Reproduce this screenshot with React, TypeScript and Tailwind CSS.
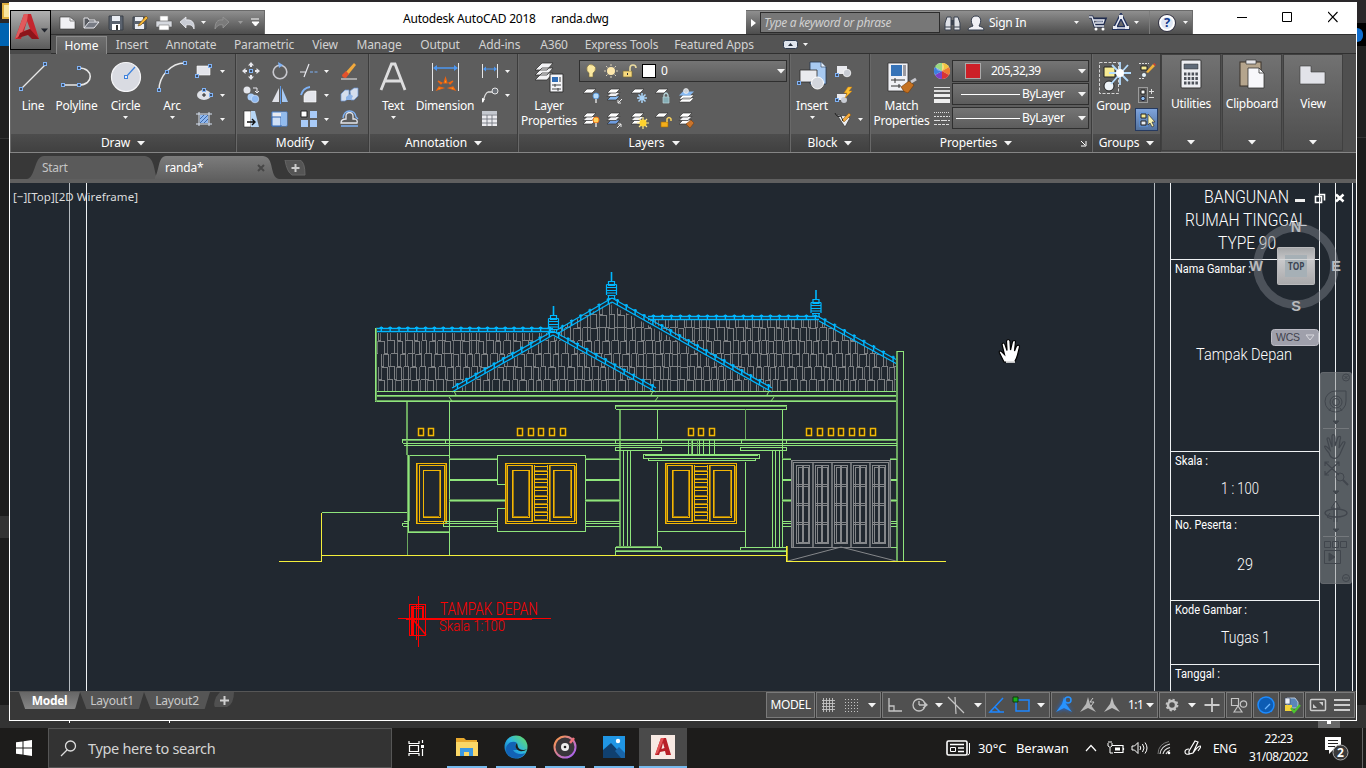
import React from "react";
import type { ReactNode } from "react";

const BLUE = "#7fb2f5";

function Caret({ big = false, dim = false }: { big?: boolean; dim?: boolean }) {
  const fill = dim ? "#9a9a9a" : "#f4f4f4";
  return big ? (
    <svg className="block shrink-0" width="8" height="5"><path d="M0 0H8L4 4.6Z" fill={fill} /></svg>
  ) : (
    <svg className="block shrink-0" width="5" height="3"><path d="M0 0H5L2.5 3Z" fill={fill} /></svg>
  );
}

function Ico({ w = 20, h = 20, className = "", children }: { w?: number; h?: number; className?: string; children: ReactNode }) {
  return (
    <svg className={`block shrink-0 ${className}`} width={w} height={h} viewBox={`0 0 ${w} ${h}`} fill="none">{children}</svg>
  );
}

function Grip({ x, y }: { x: number; y: number }) {
  return <rect x={x - 1.5} y={y - 1.5} width="3" height="3" fill="#3c4c66" stroke={BLUE} strokeWidth="1" />;
}

/* ---------- title bar ---------- */

function AppButton() {
  return (
    <div className="flex h-10 w-[41px] items-center border border-black bg-gradient-to-b from-[#b0b0b0] to-[#5c5c5c]">
      <Ico w={39} h={38}>
        <path d="M4 28 13 3h7l8 25h-7l-2-7-7 1-2 6Z" fill="#c4262e" />
        <path d="M13 3h4l-1 7-6 14-6 4Z" fill="#e05a5c" />
        <path d="M16 10l3 8-6 2Z" fill="#8f8f8f" />
        <path d="M9 22l10-4 9 10h-7l-4-4-10 3Z" fill="#8d151b" />
        <path d="M30 17.500h7l-3.500 4Z" fill="#20242c" />
      </Ico>
    </div>
  );
}

function QuickAccess() {
  return (
    <div className="flex h-6 w-[214px] shrink-0 items-center border-t border-r border-[#6a6a6a] bg-gradient-to-b from-[#8f8f8f] to-[#4d4d4d] pl-[6px]">
      <Ico w={24}><path d="M3 4h10l5 4v8H3Z" fill="#f1f1f4" stroke="#333" strokeWidth=".6" /><path d="M13 4v4h5" stroke="#888" /></Ico>
      <Ico w={24}><path d="M3 15V5h4l1 2h6v2" fill="#55585e" stroke="#e4e4e8" /><path d="M3 15 8 9h10l-5 6Z" fill="#777b84" stroke="#e9e9ee" /></Ico>
      <Ico w={24}><path d="M4 3h14v14H5l-1-1Z" fill="#5a626e" stroke="#3b4148" /><path d="M7 3h8v5H7Z" fill="#e9ecf2" /><path d="M7 11h8v6H7Z" fill="#fff" /><path d="M11 12h2v5h-2Z" fill="#333" /></Ico>
      <Ico w={24}><path d="M4 4h13v12H4Z" fill="#5a626e" stroke="#3b4148" /><path d="M6 4h8v4H6ZM6 11h9v5H6Z" fill="#e9ecf2" /><path d="M10 11 17 3l2 2-7 7-3 1Z" fill="#f2b53a" stroke="#6b4a12" strokeWidth=".6" /></Ico>
      <Ico w={24}><path d="M7 3h8v6H7Z" fill="#fff" stroke="#999" strokeWidth=".6" /><path d="M3 8h16v6H3Z" fill="#d6d9df" stroke="#555" strokeWidth=".6" /><path d="M6 12h10v5H6Z" fill="#fff" stroke="#777" strokeWidth=".6" /></Ico>
      <Ico w={20}><path d="M3 9 9 4v3c6-1 9 3 8 9-1-3-3-5-8-4v3Z" fill="#c9ccd4" stroke="#f4f4f8" strokeWidth=".7" /></Ico>
      <span className="flex w-[10px] justify-center pl-[3px]"><Caret /></span>
      <Ico w={25} className="ml-[4px]"><path d="M18 9 12 4v3C6 6 4 10 4 16c2-3 4-5 8-4v3Z" fill="#7a7a7a" stroke="#9b9b9b" strokeWidth=".7" /></Ico>
      <span className="ml-[2px] w-[10px]"><Caret dim /></span>
      <Ico w={9} h={10} className="ml-[3px]"><path d="M0 1h8M1 4h7L4.500 8Z" stroke="#fff" fill="#fff" /></Ico>
    </div>
  );
}

function InfoCenter() {
  return (
    <div className="flex h-6 w-[447px] shrink-0 items-center border-t border-r border-[#6a6a6a] bg-gradient-to-b from-[#8f8f8f] to-[#4d4d4d] text-[12px] text-white">
      <span className="flex w-[14px] justify-center"><Ico w={5} h={8}><path d="M0 0 5 4 0 8Z" fill="#fff" /></Ico></span>
      <div className="flex h-[21px] w-[180px] items-center border border-[#2c2c2c] bg-[#777] pl-[3px] tracking-[-0.35px] text-[#d0d0d0] italic">Type a keyword or phrase</div>
      <Ico w={20} className="ml-[3px]"><path d="M2 17V10l2-6h4v13ZM11 17V4h4l2 6v7Z" fill="#dfe2e8" stroke="#3a4250" /><path d="M8 7h3v5H8Z" fill="#3a4250" /><path d="M2 14h6M11 14h6" stroke="#3a4250" /></Ico>
      <Ico w={20} className="ml-[3px]"><path d="M2 17c0-3 3-3 5-4-3-5-2-10 3-10s6 5 3 10c2 1 5 1 5 4Z" fill="#f1f1f5" stroke="#333c4c" /></Ico>
      <span className="ml-[3px] w-[85px] tracking-[-0.25px]">Sign In</span>
      <Caret />
      <Ico w={21} className="ml-[8px]"><path d="M2 4h3l3 9h9M5 6h13l-2 5H8" fill="#8b95b0" stroke="#1f2b4d" strokeWidth="3" /><path d="M2 4h3l3 9h9M6 7h11l-1 3H8" stroke="#e7eaf2" strokeWidth="1.300" /><circle cx="9" cy="16" r="1.500" fill="#fff" /><circle cx="16" cy="16" r="1.500" fill="#fff" /></Ico>
      <Ico w={18} className="ml-[4px]"><path d="M9 3 3 15h12Z" stroke="#20305c" strokeWidth="4" /><path d="M9 3 3 15h12Z" stroke="#e7eaf2" strokeWidth="1.600" /><path d="M7 2h4v4H7ZM1 13h4v3H1ZM13 13h4v3h-4Z" fill="#e7eaf2" /></Ico>
      <span className="ml-[4px]"><Caret /></span>
      <span className="ml-[10px] h-full w-px bg-[#7c7c7c]" />
      <span className="ml-[9px] flex size-4 items-center justify-center rounded-full border-2 border-white bg-[#dfe7f5] text-[13px] font-bold text-[#123a8c] ring-1 ring-[#334]">?</span>
      <span className="ml-[8px]"><Caret /></span>
    </div>
  );
}

const TABS: [string, string][] = [
  ["Insert", "w-[50px]"], ["Annotate", "w-[68px]"], ["Parametric", "w-[78px]"], ["View", "w-[44px]"],
  ["Manage", "w-[64px]"], ["Output", "w-[58px]"], ["Add-ins", "w-[61px]"], ["A360", "w-[48px]"],
  ["Express Tools", "w-[87px]"], ["Featured Apps", "w-[98px]"],
];

function TopBar() {
  return (
    <div className="flex h-[52px] bg-white">
      <div className="flex w-[41px] flex-col pt-2"><AppButton /><div className="h-1 bg-[#4a4a4a]" /></div>
      <div className="flex flex-1 flex-col">
        <div className="flex h-8 pt-2">
          <QuickAccess />
          <div className="flex w-[481px] shrink-0 pl-[138px] text-[12px] leading-[17px] text-black">
            <span className="w-[148px] shrink-0 tracking-[-0.22px] whitespace-nowrap">Autodesk AutoCAD 2018</span>
            <span className="tracking-[-0.3px]">randa.dwg</span>
          </div>
          <InfoCenter />
          <div className="flex pl-[42px]">
            <Ico w={47} h={16}><path d="M2 7.500h10" stroke="#000" /></Ico>
            <Ico w={46} h={16}><path d="M.5 2.500h9v9h-9Z" stroke="#000" /></Ico>
            <Ico w={12} h={16}><path d="m0 2 9.500 10M9.500 2 0 12" stroke="#000" strokeWidth="1.100" /></Ico>
          </div>
        </div>
        <div className="flex h-5 items-end border-t border-b border-[#303030] bg-[#545454] pl-[5px] text-[12px] text-[#d2d2d2]">
          <div className="-mb-px flex h-[18px] w-[51px] items-center justify-center border border-b-0 border-[#8a8a8a] bg-gradient-to-b from-[#6f6f6f] to-[#5d5d5d] pt-px text-white">Home</div>
          {TABS.map(([t, w]) => (
            <div key={t} className={`flex h-[17px] items-center justify-center pt-px tracking-[-0.15px] whitespace-nowrap ${w}`}>{t}</div>
          ))}
          <div className="ml-[20px] flex h-[17px] items-center gap-[5px]">
            <Ico w={15} h={9}><rect x=".5" y=".5" width="14" height="8" rx="2" fill="#dfe5ee" stroke="#2e3a4d" /><path d="m5 6 2.500-3L10 6Z" fill="#26303f" /></Ico>
            <Caret />
          </div>
        </div>
      </div>
    </div>
  );
}

/* ---------- ribbon ---------- */

function Panel({ w, title, launcher = false, children }: { w: string; title: string; launcher?: boolean; children: ReactNode }) {
  return (
    <section className={`flex shrink-0 flex-col border-r border-[#3c3c3c] ${w}`}>
      <div className="flex h-20 border-l border-[#686868] bg-[#5d5d5d]">{children}</div>
      <div className="flex h-[18px] items-center justify-center gap-[7px] border-l border-[#686868] bg-gradient-to-b from-[#4d4d4d] to-[#404040] text-[12px] text-white">
        <span className={launcher ? "ml-auto pl-2 tracking-[-0.1px]" : "tracking-[-0.1px]"}>{title}</span>
        <Caret big />
        {launcher && <Ico w={7} h={7} className="mr-1 ml-auto"><path d="m1 1 4 4M6 1v5H1" stroke="#fff" /></Ico>}
      </div>
    </section>
  );
}

function Big({ w, label, caret = false, children }: { w: string; label: string; caret?: boolean; children: ReactNode }) {
  return (
    <div className={`flex shrink-0 flex-col items-center pt-[6px] text-center text-[12px] leading-[15px] text-white ${w}`}>
      <div className="h-[38px]">{children}</div>
      <span className="tracking-[-0.25px] whitespace-pre">{label}</span>
      {caret && <span className="mt-[3px]"><Caret /></span>}
    </div>
  );
}

function Col({ w, children }: { w: string; children: ReactNode }) {
  return <div className={`grid shrink-0 grid-rows-[24px_24px_24px] content-start items-center justify-items-center pt-[5px] ${w}`}>{children}</div>;
}

function DrawPanel() {
  return (
    <Panel w="w-[226px]" title="Draw">
      <Big w="w-[44px]" label="Line"><Ico w={32} h={32}><path d="M4 29 28 5" stroke="#e8e8e8" strokeWidth="1.300" /><Grip x={4} y={29} /><Grip x={28} y={4} /></Ico></Big>
      <Big w="w-[43px]" label="Polyline"><Ico w={32} h={32}><path d="M2 25h16c15 0 15-17 0-17" stroke="#e8e8e8" strokeWidth="1.600" /><Grip x={2} y={25} /><Grip x={18} y={25} /><Grip x={18} y={8} /></Ico></Big>
      <Big w="w-[55px]" label="Circle" caret><Ico w={32} h={32}><circle cx="16" cy="17" r="14.500" fill="#d9dbe2" stroke="#f6f6f8" strokeWidth="1.200" /><path d="M16 17 25 7" stroke="#3f83dd" strokeWidth="1.200" /><rect x="14.500" y="15.500" width="3" height="3" fill="#e8edf8" stroke="#3f83dd" /></Ico></Big>
      <Big w="w-[38px]" label="Arc" caret><Ico w={34} h={32}><path d="M4 30C4 16 16 3 30 3" stroke="#e8e8e8" strokeWidth="1.500" /><Grip x={4} y={30} /><Grip x={12} y={12} /><Grip x={30} y={3} /></Ico></Big>
      <Col w="w-[25px]">
        <Ico><path d="M3 5h13v9H3Z" fill="#e3e4ea" stroke="#fff" strokeWidth=".6" /><Grip x={3} y={15} /><Grip x={16} y={5} /></Ico>
        <Ico><ellipse cx="10" cy="10" rx="7" ry="5" fill="#e0e2e8" /><path d="M8 10h4M10 8v4" stroke="#222" /><Grip x={10} y={5} /><Grip x={17} y={10} /></Ico>
        <Ico><path d="M5 3v14M15 3v14M2 5h16M2 15h16" stroke="#d8e3f3" /><path d="M6 6h8v8H6Z" fill="#8fb7ee" /><path d="m6 10 4-4m-4 8 8-8m-4 8 4-4" stroke="#2a5596" strokeWidth=".8" /></Ico>
      </Col>
      <Col w="w-[12px]"><Caret /><Caret /><Caret /></Col>
    </Panel>
  );
}

function ModifyPanel() {
  return (
    <Panel w="w-[133px]" title="Modify">
      <Col w="w-[28px]">
        <Ico><path d="M10 3v14M3 10h14" stroke="#e8e8ee" strokeWidth="2" strokeDasharray="3 2.500" /><path d="m10 1 3 3.500H7ZM10 19l3-3.500H7ZM1 10l3.500-3v6ZM19 10l-3.500-3v6Z" fill="#e8e8ee" /><Grip x={10} y={10} /></Ico>
        <Ico><circle cx="6" cy="5" r="3.500" fill="#e4e6ec" /><circle cx="10" cy="12" r="3.500" fill="#a9cdf8" /><circle cx="14" cy="14" r="3.800" fill="#8fb9f0" stroke="#dce9fb" strokeWidth=".6" /><path d="M12 3h4v4m-2-1 2 2 2-2" stroke="#e8e8ee" /></Ico>
        <Ico><path d="M3 2h7v16H3Z" fill="#fff" stroke="#222" strokeWidth=".6" /><path d="M10 2h4l4 16h-8Z" fill="#b7d6f5" /><path d="M6 13h7m-2-3 3 3-3 3" stroke="#111" strokeWidth="1.400" /></Ico>
      </Col>
      <Col w="w-[29px]">
        <Ico><circle cx="10" cy="11" r="6.800" stroke="#c9c9cf" strokeWidth="1.600" /><path d="m8 1 5 3-4 3Z" fill={BLUE} /></Ico>
        <Ico><path d="M9 3v14H2Z" fill="#dfe1e8" /><path d="M12 3v14h6Z" fill="#a6c9f4" /><path d="M10.500 1v18" stroke="#5b97e6" /></Ico>
        <Ico><path d="M2 3h15v14H2Z" fill="#e8eaf0" stroke="#4d87d6" /><path d="M2 8h9v9H2Z" fill="#cfdff5" stroke="#2d62b2" /><path d="M11 4h5v12h-5Z" fill="#91bbee" /></Ico>
      </Col>
      <Col w="w-[30px]">
        <Ico><path d="M1 11h6M5 16 10 3" stroke="#e8e8ee" strokeWidth="1.200" /><path d="M11 11h8" stroke={BLUE} strokeDasharray="3 1.500" /></Ico>
        <Ico><path d="M5 17V11q1-5 7-5h5v11Z" fill="#e3e5eb" stroke="#fff" strokeWidth=".6" /><path d="M2 10q2-7 9-8" stroke={BLUE} strokeWidth="1.800" /></Ico>
        <Ico><path d="M2 2h6v6H2Z" fill="#fff" stroke="#222" /><path d="M11 2h7v7h-7ZM2 11h7v7H2ZM11 11h7v7h-7Z" fill="#a9cbf7" /></Ico>
      </Col>
      <Col w="w-[5px]"><Caret /><Caret /><Caret /></Col>
      <Col w="w-[40px]">
        <Ico><path d="m6 12 9-10 2 2-8 10Z" fill="#f2a93c" /><path d="m3 14 4-4 3 3-3 4q-4 0-4-3Z" fill="#e4522c" /><path d="M2 18h16" stroke="#eee" /></Ico>
        <Ico><path d="m2 9 4-4h4v8l-4 3H2ZM11 6l4-3h4v8l-4 4h-3Z" fill="#d5deed" stroke="#6b97d5" strokeWidth=".7" /><path d="m7 12 4-3 3 2-2 4H7Z" fill="#8eb4e8" /></Ico>
        <Ico><path d="M7 10V7a3 3 0 0 1 7 0v3h2q3 1 2 4H2q0-4 5-4Z" stroke="#e3e6ec" strokeWidth="1.300" /><path d="M2 17h17M4 9q1-7 6.500-7t6.500 6l2 2" stroke={BLUE} strokeWidth="1.300" /></Ico>
      </Col>
    </Panel>
  );
}

function AnnotationPanel() {
  return (
    <Panel w="w-[149px]" title="Annotation">
      <Big w="w-[46px]" label="Text" caret><Ico w={32} h={32}><path d="M4 30 14.500 4h3.500L28 30M8 21h17" stroke="#dededf" strokeWidth="2.800" /></Ico></Big>
      <Big w="w-[58px]" label="Dimension"><Ico w={32} h={32}><path d="M3.500 3v28M29.500 3v28" stroke="#e6e6e6" /><path d="M6 8h21" stroke="#4d97f0" strokeWidth="1.500" /><path d="m4 8 4-3v6ZM29 8l-4-3v6Z" fill="#4d97f0" /><path d="m15 23 1.500-5 1.500 5ZM12 24l-3-3 4 2ZM21 24l3-3-4 2ZM8 30l2-3 4 1ZM26 30l-2-3-4 1Z" fill="#ffb01f" stroke="#f0640f" strokeWidth="1.200" /></Ico></Big>
      <Col w="w-[31px]">
        <Ico><path d="M2.500 3v14M17.500 3v14" stroke="#e6e6e6" /><path d="M4 8h12" stroke="#4d97f0" /><path d="m3 8 3-2.500v5ZM17 8l-3-2.500v5Z" fill="#4d97f0" /></Ico>
        <Ico><path d="M3 17q2-9 5-10h5" stroke="#dedede" strokeWidth="1.300" /><path d="m2 18 0-5 3 1Z" fill="#fff" /><circle cx="15" cy="6" r="3" fill="#6b7077" stroke="#e6e6e6" /></Ico>
        <Ico><path d="M2 2h15v15H2Z" fill="#ebebef" /><path d="M2 2h15v3.500H2Z" fill="#c4c8cf" /><path d="M2 6h15M2 10h15M2 14h15M7 6v11M12 6v11" stroke="#727780" strokeWidth=".9" /></Ico>
      </Col>
      <Col w="w-[5px]"><Caret /><Caret /><span /></Col>
    </Panel>
  );
}

function Stack({ top = "#fff", bottom = "#fff", n = 3 }: { top?: string; bottom?: string; n?: number }) {
  return (
    <>
      {n > 2 && <path d="m2 14 4-4h9l-4 4Z" fill={bottom} stroke="#333" strokeWidth=".7" />}
      {n > 1 && <path d="m2 10.500 4-4h9l-4 4Z" fill="#f2f2f4" stroke="#333" strokeWidth=".7" />}
      <path d="m2 7 4-4h9l-4 4Z" fill={top} stroke="#333" strokeWidth=".7" />
    </>
  );
}

function LayersPanel() {
  return (
    <Panel w="w-[272px]" title="Layers">
      <Big w="w-[60px]" label={"Layer\nProperties"}>
        <Ico w={32} h={34}>
          <path d="m2 20 7-7h11l-6 7ZM2 15l7-7h11l-6 7ZM2 10l7-7h11l-6 7Z" fill="#f3f3f5" stroke="#333" strokeWidth=".8" />
          <path d="M17 14h13v18H17Z" fill="#f5f5f8" stroke="#333" /><path d="M19 17h6v5h-6Z" fill="#2f6cb5" /><path d="M26 17h2v5h-2Z" fill="#999" /><path d="M19 25h9M19 29h9M22 24v3M25 28v3" stroke="#333" strokeWidth=".9" />
        </Ico>
      </Big>
      <div className="flex flex-col pt-[6px]">
        <div className="flex h-[22px] w-[208px] items-center border border-[#2f2f2f] bg-gradient-to-b from-[#757575] to-[#5c5c5c] pr-[1px] text-[12px] text-white">
          <Ico w={20} className="ml-px"><path d="M8 16v-4q-3-2-2-6 2-4 6-2 4 2 2 6l-2 2v4Z" fill="#fbe8a0" stroke="#7a6a36" strokeWidth=".6" /></Ico>
          <Ico w={20}><circle cx="10" cy="10" r="4" fill="#ffe9ad" /><path d="M10 3v2m0 10v2M3 10h2m10 0h2M5 5l1.500 1.500m7 7L15 15M15 5l-1.500 1.500m-7 7L5 15" stroke="#d8cfb8" /></Ico>
          <Ico w={20}><path d="M2 10h9v6H2Z" fill="#f7d97c" stroke="#7a6a36" strokeWidth=".7" /><path d="M9 10V7a3 3 0 0 1 6 0" stroke="#eadb9e" strokeWidth="1.600" /><path d="M6.500 12v2" stroke="#333" /></Ico>
          <span className="ml-px size-[14px] border border-black bg-white" />
          <span className="ml-[5px] flex-1">0</span>
          <Caret big />
        </div>
        <div className="mt-[2px] ml-[2px] grid grid-cols-[24px_24px_24px_24px_24px] grid-rows-[24px_24px] items-center">
          <Ico w={24}><Stack n={1} /><circle cx="15" cy="10" r="3" fill="#b5daf8" stroke="#4d92dd" strokeWidth=".8" /><path d="M15 13v4" stroke="#ddd" strokeWidth="1.500" /></Ico>
          <Ico w={24}><Stack bottom="#86b9f2" /><path d="m17 13-4 4m0-3v3h3" stroke="#eee" /></Ico>
          <Ico w={24}><Stack n={1} /><path d="M13 7v10M8 12h10M9.500 8.500l7 7M16.500 8.500l-7 7" stroke="#a9d3f7" strokeWidth="1.500" /></Ico>
          <Ico w={24}><Stack n={1} /><path d="M10 11h6v6h-6Z" fill="#86aeb6" stroke="#b8d5da" strokeWidth=".7" /><path d="M11 11V9q2-4 4 0v2" stroke="#b8d5da" strokeWidth="1.300" /></Ico>
          <Ico w={24}><path d="m2 16 4-4h11l-4 4ZM2 13l4-4h11l-4 4Z" fill="#fff" stroke="#333" strokeWidth=".5" /><path d="m2 9.500 4-4h11l-4 4Z" fill="#86b9f2" /><circle cx="9" cy="5" r="2.500" fill="#ccd2da" stroke="#fff" strokeWidth=".6" /></Ico>
          <Ico w={24}><Stack /><circle cx="15" cy="10" r="3" fill="#ffd35c" stroke="#f0751b" /><path d="M15 13v4" stroke="#ddd" strokeWidth="1.500" /></Ico>
          <Ico w={24}><Stack bottom="#6f9de0" /><path d="m12 18 4-4m-3 0h3v3" stroke="#eee" /></Ico>
          <Ico w={24}><Stack /><path d="M14 7v12M8 13h12M10 9l8 8M18 9l-8 8" stroke="#ffe98c" strokeWidth="1.200" /><circle cx="14" cy="13" r="3.500" fill="#ffd22e" /></Ico>
          <Ico w={24}><Stack n={1} /><path d="M8 12h7v5H8Z" fill="#f4ae1b" stroke="#a56d00" strokeWidth=".6" /><path d="M14 12V9q2-3 4 0v2" stroke="#f7d15e" strokeWidth="1.500" /></Ico>
          <Ico w={24}><Stack /><path d="m9 14 5-4 3 3-4 5Z" fill="#c9742c" stroke="#7b3e0c" strokeWidth=".6" /></Ico>
        </div>
      </div>
    </Panel>
  );
}

function BlockPanel() {
  return (
    <Panel w="w-[80px]" title="Block">
      <Big w="w-[42px]" label="Insert" caret>
        <Ico w={32} h={34}><path d="M14 2h11l5 5v17H14Z" fill="#a8caf2" stroke="#25364e" strokeWidth=".8" /><path d="M25 2v5h5" fill="#e4effc" stroke="#25364e" strokeWidth=".6" /><path d="M4 10h17v12H4Z" fill="#e9eaef" stroke="#2c2c2c" strokeWidth=".8" /><circle cx="21.500" cy="23" r="6" fill="#d3d6dd" stroke="#fff" /><Grip x={3} y={23} /></Ico>
      </Big>
      <Col w="w-[20px]">
        <Ico><path d="M4 5h10v8H4Z" fill="#e9eaef" /><circle cx="14" cy="12" r="3.800" fill="#c8ccd4" stroke="#fff" strokeWidth=".7" /><Grip x={4} y={14} /></Ico>
        <Ico><path d="M4 9h9v6H4Z" fill="#e9eaef" /><circle cx="11" cy="15" r="3" fill="#c8ccd4" /><path d="m15 2-4 6h3l-2 5 7-7h-3l3-4Z" fill="#ffc12e" stroke="#c8780f" strokeWidth=".5" /><Grip x={4} y={15} /></Ico>
        <Ico><path d="M4 6 12 18l5-9-4-2Z" fill="#eceef2" stroke="#333" strokeWidth=".7" /><path d="m9 11 7-7 2 2-7 7Z" fill="#f2a93c" stroke="#7b4a0c" strokeWidth=".5" /><path d="M2 4q2 5 6 3l2 5" stroke="#222" /></Ico>
      </Col>
      <Col w="w-[15px]"><span /><span /><Caret /></Col>
    </Panel>
  );
}

function Combo({ className = "", children }: { className?: string; children: ReactNode }) {
  return <div className={`flex h-[22px] w-[137px] items-center border border-[#2f2f2f] bg-gradient-to-b from-[#757575] to-[#5c5c5c] pr-[2px] ${className}`}>{children}</div>;
}

function PropertiesPanel() {
  return (
    <Panel w="w-[222px]" title="Properties" launcher>
      <Big w="w-[61px]" label={"Match\nProperties"}>
        <Ico w={34} h={34}><path d="M3 3h20v28H3Z" fill="#f0f1f5" stroke="#333" strokeWidth=".8" /><path d="M6 5h11v11H6Z" fill="#3673b8" /><path d="M18 5h3v11h-3Z" fill="#9a9aa2" /><path d="M6 20h14M6 26h10M10 18v5M14 24v4" stroke="#333" /><path d="m16 27 8-6 5 4-6 8q-4 0-7-6Z" fill="#c57120" stroke="#6d3b0b" strokeWidth=".6" /><path d="m26 22 5-3" stroke="#c9c9cf" strokeWidth="3" /></Ico>
      </Big>
      <Col w="w-[20px]">
        <Ico><circle cx="10" cy="10" r="8" fill="#eee" /><path d="M10 10V2a8 8 0 0 1 7 4Z" fill="#f3c43d" /><path d="m10 10 7-4a8 8 0 0 1 0 8Z" fill="#ef7d32" /><path d="m10 10 7 4a8 8 0 0 1-7 4Z" fill="#d83434" /><path d="M10 10v8a8 8 0 0 1-7-4Z" fill="#7b3fc9" /><path d="m10 10-7 4a8 8 0 0 1 0-8Z" fill="#3d7fe0" /><path d="M10 10 3 6a8 8 0 0 1 7-4Z" fill="#65c43f" /><circle cx="8" cy="6" r="4" fill="#fff" opacity=".35" /></Ico>
        <Ico><path d="M2 2.500h16" stroke="#ddd" /><path d="M2 6h16" stroke="#ddd" strokeWidth="2" /><path d="M2 10.500h16" stroke="#eee" strokeWidth="3" /><path d="M2 16h16" stroke="#eee" strokeWidth="4" /></Ico>
        <Ico><path d="M2 3.500h16" stroke="#ddd" strokeDasharray="1 1" /><path d="M2 7.500h16" stroke="#ddd" strokeDasharray="2 1" /><path d="M2 11.500h16" stroke="#ddd" strokeDasharray="6 1" /><path d="M2 15.500h16" stroke="#ddd" strokeDasharray="3 1" /></Ico>
      </Col>
      <div className="flex flex-col pt-[6px] text-[12px] tracking-[-0.1px] text-white">
        <Combo><span className="mr-[10px] ml-[12px] size-4 border border-[#aaa] bg-[#cd2027]" /><span className="flex-1 tracking-[-0.55px]">205,32,39</span><Caret big /></Combo>
        <Combo className="mt-px"><span className="ml-2 h-px w-[59px] bg-white" /><span className="ml-[2px] flex-1 tracking-[-0.3px]">ByLayer</span><Caret big /></Combo>
        <Combo className="mt-[2px]"><span className="ml-[3px] h-px w-[64px] bg-white" /><span className="ml-[2px] flex-1 tracking-[-0.3px]">ByLayer</span><Caret big /></Combo>
      </div>
    </Panel>
  );
}

function GroupsPanel() {
  return (
    <Panel w="w-[69px]" title="Groups">
      <Big w="w-[41px]" label="Group">
        <Ico w={34} h={34}><rect x="2.500" y="2.500" width="19" height="31" stroke="#d5d5d5" strokeDasharray="3 1.500" /><path d="M7 7h11v10H7Z" fill="#f7eb93" stroke="#222" /><circle cx="12" cy="26" r="5" fill="#eef3f8" stroke="#222" /><path d="M23 2v23M12 13h22M15 5l16 16M31 5 14 24" stroke="#b5ddff" strokeWidth="1.800" /><circle cx="23" cy="13" r="4" fill="#fff" /></Ico>
      </Big>
      <Col w="w-[25px]">
        <Ico><path d="M2 2.500h10M2 17.500h6" stroke="#ddd" strokeDasharray="2 1" /><path d="M4 5h6v4H4Z" fill="#f7eb93" stroke="#222" /><circle cx="7" cy="14" r="2.500" fill="#e6f3fb" stroke="#222" strokeWidth=".6" /><path d="m9 11 7-8 2 2-7 7Z" fill="#f2b33a" /><path d="m16 3 1.500-1 1.500 2-1 1Z" fill="#d04030" /></Ico>
        <Ico><rect x="1.500" y="2.500" width="9" height="15" stroke="#ddd" strokeDasharray="1 1" /><path d="M4 5h4v4H4Z" fill="#fff" stroke="#222" /><circle cx="6" cy="13.500" r="2.200" fill="#8fbdee" stroke="#223" /><path d="M12 6.500h5M14.500 4v5M12 12.500h5" stroke="#ddd" /></Ico>
        <div className="flex size-[23px] items-center justify-center border border-[#263a60] bg-gradient-to-b from-[#7fa4dc] to-[#54739f]"><Ico><rect x="2.500" y="3.500" width="8" height="14" stroke="#5b97e6" strokeDasharray="1 1" /><path d="M4 5h5v4H4Z" fill="#f7eb93" stroke="#222" /><path d="M4 12h5v4H4Z" fill="#e8ecf2" stroke="#222" /><path d="m11 5 0 11 2-2 2 4 2-1-2-4h3Z" fill="#f8f2b0" stroke="#333" strokeWidth=".7" /></Ico></div>
      </Col>
    </Panel>
  );
}

function Collapsed({ label, children }: { label: string; children: ReactNode }) {
  return (
    <div className="mr-px flex h-[97px] w-[60px] shrink-0 flex-col items-center border border-[#404040] bg-gradient-to-b from-[#727272] to-[#4e4e4e] pt-[4px] text-[12px] text-white">
      <div className="h-9">{children}</div>
      <span className="tracking-[-0.25px]">{label}</span>
      <span className="mt-auto mb-[5px]"><Caret big /></span>
    </div>
  );
}

function Ribbon() {
  return (
    <div className="flex h-[99px] border-b border-[#858585] bg-[#4f4f4f]">
      <DrawPanel /><ModifyPanel /><AnnotationPanel /><LayersPanel /><BlockPanel /><PropertiesPanel /><GroupsPanel />
      <Collapsed label="Utilities"><Ico w={24} h={30}><rect x="2" y="1" width="20" height="28" rx="1" fill="#edeef2" stroke="#333" /><path d="M5 5h14v5H5Z" fill="#5f6a78" stroke="#333" strokeWidth=".5" /><path d="M5 15h14M5 19.500h14M5 24h14" stroke="#4c5058" strokeWidth="3" strokeDasharray="2.500 1.300" /></Ico></Collapsed>
      <Collapsed label="Clipboard"><Ico w={28} h={32}><rect x="2" y="3" width="21" height="24" fill="#b5a58d" stroke="#3a322a" /><path d="M8 1h10v4H8Z" fill="#e6e6ea" stroke="#333" strokeWidth=".7" /><path d="M10 9h11l5 5v15H10Z" fill="#f8f8fb" stroke="#333" strokeWidth=".8" /><path d="M21 9v5h5" stroke="#333" strokeWidth=".8" /></Ico></Collapsed>
      <Collapsed label="View"><Ico w={28} h={30}><path d="M1 7h11v6h14v12H1Z" fill="#e2e3e9" stroke="#3a3a3a" strokeWidth=".6" /></Ico></Collapsed>
    </div>
  );
}

/* ---------- document tabs ---------- */

function DocTabs() {
  return (
    <div className="flex h-[30px] flex-col bg-[#383838]">
      <div className="flex h-[26px] items-end pl-[14px] text-[12px]">
        <div className="relative flex h-[23px] w-[131px] items-center pt-px pl-[18px] text-[#c4c4c4]">
          <svg className="absolute top-0 left-0" width="134" height="23"><path d="M3 23C12 21 10 0 20 0H121C132 1 130 21 134 23Z" fill="#5a5a5a" /></svg>
          <span className="relative tracking-[-0.3px]">Start</span>
        </div>
        <div className="relative flex h-[23px] w-[130px] items-center pt-px pl-[10px] text-white">
          <svg className="absolute top-0 left-0" width="130" height="23"><defs><linearGradient id="tab" x2="0" y2="1"><stop stopColor="#7c7c7c" /><stop offset="1" stopColor="#606060" /></linearGradient></defs><path d="M-2 23C5 19 2 0 11 0H108C120 1 114 21 124 23Z" fill="url(#tab)" /></svg>
          <span className="relative w-[35px] tracking-[-0.2px]">randa*</span>
          <svg className="relative ml-[57px]" width="8" height="8"><path d="m1 1 6 6M7 1 1 7" stroke="#474747" strokeWidth="2" /></svg>
        </div>
        <svg className="mb-[3px] -ml-[2px] block" width="24" height="16"><path d="M2 0H17Q22 2 22 15H9Q4 12 2 0Z" fill="#555" stroke="#666" /><path d="M12.500 4v8M8.500 8h8" stroke="#ccc" strokeWidth="2" /></svg>
      </div>
      <div className="h-1 bg-[#5f5f5f]" />
    </div>
  );
}

/* ---------- drawing ---------- */

const G = "#8fe57c";
const GD = "#6ba85f";
const O = "#f2b705";
const OD = "#a57c0b";
const B = "#00b7ff";
const GR = "#85878a";

function rnd(i: number) {
  const v = Math.sin(i * 127.1 + 11.7) * 43758.5453;
  return v - Math.floor(v);
}

function shingles() {
  let bright = "";
  let dim = "";
  for (let r = 0; r < 8; r++) {
    const bottom = 392.5 - r * 13 + (r ? 0 : -1);
    const top = 379.5 - r * 13;
    let x = 374 + (r % 3) * 3.1 + 1;
    let c = 0;
    while (x < 898) {
      const j = rnd(r * 97 + c);
      const a = Math.round(x) + 0.5;
      const w = j > 0.5 ? 3 : 2;
      const step = j > 0.75 ? 10 : j > 0.3 ? 8.5 : 7;
      const next = Math.round(x + step) + 0.5;
      bright += `M${a} ${top}V${bottom}M${a} ${bottom}h${w}M${a + w} ${top + (c % 2 ? 0 : 1)}H${next}`;
      dim += `M${a + w} ${top}V${bottom}`;
      x += step;
      c++;
    }
  }
  return { bright, dim };
}

const roof = shingles();

function Ridge({ x1, y1, x2, y2 }: { x1: number; y1: number; x2: number; y2: number }) {
  const len = Math.hypot(x2 - x1, y2 - y1);
  const horizontal = y1 === y2;
  const n = Math.round((len - 6) / (horizontal ? 8.5 : 9.8));
  const dots = Array.from({ length: n }, (_, i) => (i + 0.6) / n);
  const off = horizontal ? 3 : 4;
  return (
    <g stroke={B} fill="none">
      <path d={`M${x1} ${y1}L${x2} ${y2}`} strokeWidth="1.300" />
      <path d={`M${x1} ${y1 + off}L${x2} ${y2 + off}`} strokeWidth="1.300" />
      {dots.map((t) => {
        const x = x1 + (x2 - x1) * t;
        const y = y1 + (y2 - y1) * t;
        return <path key={t} d={`M${x} ${y - 2}V${y + off}M${x - 1.7} ${y - 0.7}h3.400`} strokeWidth="1.400" />;
      })}
    </g>
  );
}

function Finial({ x, y }: { x: number; y: number }) {
  return (
    <g transform={`translate(${x} ${y})`} stroke={B} fill="none">
      <path d="M0 0V9" strokeWidth="1.600" />
      <path d="M-3 9.500H3V13.500H-3ZM-5 12.500H5M-5 12.500V23M5 12.500V23M-5.500 15.500H5.500M-5.500 18.500H5.500M-5 21H5M-4 23.500H4M-3 23V26M3 23V26M-4 26.500H4" strokeWidth="1.200" />
    </g>
  );
}

function Vent({ xs }: { xs: number[] }) {
  return <>{xs.map((x) => <rect key={x} x={x + 0.5} y="428.500" width="5" height="7" fill="#26220f" stroke={O} strokeWidth="1.500" />)}</>;
}

function TwinWindow({ x }: { x: number }) {
  const slats = Array.from({ length: 14 }, (_, i) => 465.5 + i * 4.15);
  return (
    <g transform={`translate(${x} 0)`} fill="none" stroke={O} shapeRendering="crispEdges">
      <path d="M.5 463.500H71.500V523.500H.5Z" />
      <path d="M2.500 465.500V521.500H27.500V465.500Z" />
      <path d="M44.500 465.500H69.500V521.500H44.500Z" />
      <path d="M1.500 464V523M26.500 466V521M45.500 466V521M70.500 466V521" stroke={OD} />
      <path d="M7 470.500H24V517H7ZM48.500 470.500H66V517H48.500Z" />
      <path d="M8 471V516M23 471V516M49.500 471V516M65 471V516M8 516H23M49 516H65" stroke={OD} />
      <path d="M29.500 465V521M42.500 465V521" />
      {slats.map((y, i) => <path key={y} d={`M30 ${Math.round(y) + 0.5}H43`} stroke={i % 2 ? OD : O} />)}
      {slats.filter((_, i) => i % 2).map((y) => <path key={y} d={`M30 ${Math.round(y) + 1.5}H43`} />)}
    </g>
  );
}

function Siding({ x1, x2, mid = x2 }: { x1: number; x2: number; mid?: number }) {
  return (
    <>
      <path d={`M${x1} 459.500H${x2}M${x1} 479.500H${x2}M${x1} 480.500H${x2}M${x1} 500.500H${mid}M${x1} 521.500H${x2}M${x1} 523.500H${x2}M${x1} 526.500H${x2}`} />
      <path d={`M${x1} 458.500H${x2}M${x1} 499.500H${mid}M${x1} 501.500H${mid}`} stroke={GD} opacity=".8" />
    </>
  );
}

function Elevation() {
  return (
    <g fill="none">
      <clipPath id="roof"><path d="M376 333H549L612 302 648 320H818L897 364V392H376Z" /></clipPath>
      <g clipPath="url(#roof)" shapeRendering="crispEdges">
        <path d={roof.dim} stroke="#64686c" />
        <path d={roof.bright} stroke="#7e8184" />
      </g>
      <path d="M452 391 553 334 656 390" stroke="#212830" strokeWidth="4" />
      <Ridge x1={376} y1={328.5} x2={553} y2={328.5} />
      <Ridge x1={648} y1={316.5} x2={819} y2={316.5} />
      <path d="M612 303 771 390" stroke="#212830" strokeWidth="4" />
      <Ridge x1={452} y1={388} x2={553} y2={331} />
      <Ridge x1={553} y1={331} x2={656} y2={388} />
      <Ridge x1={557} y1={330} x2={612} y2={298} />
      <Ridge x1={612} y1={298} x2={772} y2={388} />
      <Ridge x1={819} y1={317} x2={897} y2={360} />
      <Finial x={553.5} y={306} />
      <Finial x={611.5} y={272} />
      <Finial x={816} y={290} />

      <g stroke={G} shapeRendering="crispEdges">
        <path d="M376 391.500H897M376 395.500H897M375 401.500H897M375.500 328V402M615.500 405.500H787M616 409.500H787M615.500 405V409M786.500 405V409" />
        <path d="M376 396.500H897M376.500 328V402M616 406.500H787M407.500 402V555M620.500 410V547M745.500 409V439M897.500 351V561" stroke={GD} />
        <path d="M375 400.500H897M406.500 402V455M619.500 410V547M896.500 351V561M402.500 440.500H897M408 531.500H449" stroke={GD} />
        <path d="M449.500 402V555M657.500 409V440M657.500 462V547M745.500 462V547M782.500 409V547M897 351.500H904M903.500 351V561" />
        <path d="M402.500 439.500H897M402.500 443.500H897M404 445.500H897M402.500 439V443M445.500 439V443M615.500 440V443M661.500 440V443M741 440V443M786.500 440V443" />
        <path d="M615.500 447.500H661.500V450.500H615.500ZM740.500 447.500H786.500V450.500H740.500ZM623.500 451V547M627.500 451V547M630.500 451V547M772.500 451V547M775.500 451V547M779.500 451V547" />
        <path d="M643.500 454.500H759.500V458.500H643.500ZM648 458.500V460.500H755V458.500M645 455.500H758M688.500 440V454M692.500 440V454M699.500 440V454M703.500 440V454M709.500 440V454M714.500 440V454" />
        <path d="M691.500 440V454M697.500 440V454" stroke={GD} />
        <path d="M408.500 455.500H449M408.500 455V532M408 532.500H449M497.500 484.500V455.500H585.500V531.500H497.500V508.500H505M497.500 484.500H505M657 531.500H745" />
        <path d="M615.500 547.500H661.500V551.500M740.500 551V547.500H787M615.500 547V555M615 551.500H787M402.500 526.500H408M402.500 526V523.500H408M404 521.500H408M443.500 526V521.500" />
        <path d="M615 550.500H787M661 546.500H616M409.500 455V521" stroke={GD} />
        <Siding x1={449} x2={497} mid={505} />
        <Siding x1={585} x2={620} />
        <Siding x1={782} x2={791} />
        <Siding x1={890} x2={897} />
        <path d="M322 512.500H407M891 547.500H897" />
      </g>
      <path d="m454 391 2 4m-7 2 3 4M653 391l-2 4m7 2-3 4M769 391l-2 4m7 2-3 4" stroke={G} />

      <Vent xs={[418, 428]} />
      <Vent xs={[517, 528, 538, 549, 560]} />
      <Vent xs={[688, 698, 709]} />
      <Vent xs={[806, 817, 828, 838, 849, 859, 870]} />

      <g stroke={O} shapeRendering="crispEdges">
        <path d="M416.500 463.500H446.500V523.500H416.500ZM419.500 465.500H444.500V521.500H419.500ZM423.500 470.500H440V517H423.500Z" />
        <path d="M417.500 464V523M445.500 464V523M439 471V516M424 516H439" stroke={OD} />
      </g>
      <path d="M443 526.500H449M445 521.500H449M445 523.500H449" stroke={G} />
      <TwinWindow x={505} />
      <TwinWindow x={665} />

      <g stroke={GR} shapeRendering="crispEdges">
        <path d="M791.500 460.500H890V547H791.500ZM793.500 462.500H888V547M793.500 462V547" />
        <path d="M792.500 461V547M889 461V547" stroke="#5e6266" />
        {[0, 1, 2, 3, 4].map((i) => {
          const x = 796.5 + i * 19;
          return (
            <g key={i}>
              <path d={`M${x} 465.500h13v78h-13ZM${x + 1.5} 467h10v75h-10ZM${x + 5.5} 466v77M${x + 7} 466v77M${x} 484.500h13M${x} 486h13M${x} 503.500h13M${x} 505h13M${x} 522.500h13M${x} 524h13`} />
              {i < 4 && <path d={`M${x + 15.5} 463v84M${x + 16.5} 463v84`} stroke="#6c7074" />}
            </g>
          );
        })}
      </g>
      <path d="M788 561 841 547 896 561" stroke={GR} />
      <path d="M279 561.500H321.500V512.500M321 555.500H787M786.500 546V561.500H946" stroke="#f4ef3b" shapeRendering="crispEdges" />
      <path d="M787.500 546V561" stroke="#b6ad1b" shapeRendering="crispEdges" />
    </g>
  );
}

function Label({ x, y, w, size, children, fill = "#fff" }: { x: number; y: number; w: number; size: number; children: string; fill?: string }) {
  return <text x={x} y={y} fontSize={size} textLength={w} lengthAdjust="spacingAndGlyphs" fill={fill} fontFamily="Roboto, 'Liberation Sans', sans-serif" fontWeight={size < 14 ? 400 : 300}>{children}</text>;
}

function ViewLetter({ x, y, children }: { x: number; y: number; children: string }) {
  return <text x={x} y={y} textAnchor="middle" fontSize="14.500" fontWeight="700" fill="#b9bbbe" fontFamily="'Liberation Sans', sans-serif">{children}</text>;
}

function Canvas() {
  return (
    <svg className="block" width="1346" height="508" viewBox="10 183 1346 508" fill="none">
      <rect x="10" y="183" width="1346" height="508" fill="#212830" />
      <g stroke="#eef1f3" shapeRendering="crispEdges">
        <path d="M86.500 183V691M1170.500 183V691M1319.500 183V691M1335.500 183V691M1352.500 183V691" />
        <path d="M1170 259.500H1319M1170 451.500H1319M1170 515.500H1319M1170 600.500H1319M1170 664.500H1319" />
        <path d="M69.500 183V691M1154.500 183V691" stroke="#b4babf" />
      </g>
      <text x="13" y="201" fontSize="11.500" textLength="125" fill="#dcdcdc" fontFamily="'Noto Sans', sans-serif">[−][Top][2D Wireframe]</text>
      <Elevation />
      <g stroke="#f00" shapeRendering="crispEdges">
        <path d="M398 618.500H551M406 619.500H532M418.500 596V647M416.500 604V640M409.500 604.500H425.500V635.500H409.500ZM411.500 607V635M412.500 607V635M413.500 607V635M411 606.500H424M411 608.500H424M423.500 606V618M422.500 606V618" />
      </g>
      <path d="m411 617 15 18" stroke="#f00" strokeWidth="1.500" />
      <Label x={440} y={615} w={98} size={18} fill="#f00">TAMPAK DEPAN</Label>
      <Label x={439} y={631} w={66} size={14} fill="#f00">Skala 1:100</Label>

      <Label x={1204} y={203} w={85} size={18}>BANGUNAN</Label>
      <Label x={1185} y={226} w={122} size={18}>RUMAH TINGGAL</Label>
      <Label x={1218} y={249} w={58} size={18}>TYPE 90</Label>
      <Label x={1175} y={273} w={76} size={12.5}>Nama Gambar :</Label>
      <Label x={1196} y={360} w={96} size={17}>Tampak Depan</Label>
      <Label x={1175} y={465} w={33} size={12.5}>Skala :</Label>
      <Label x={1221} y={494} w={38} size={17}>1 : 100</Label>
      <Label x={1175} y={529} w={62} size={12.5}>No. Peserta :</Label>
      <Label x={1237} y={570} w={16} size={17}>29</Label>
      <Label x={1175} y={614} w={72} size={12.5}>Kode Gambar :</Label>
      <Label x={1221} y={643} w={49} size={17}>Tugas 1</Label>
      <Label x={1175} y={678} w={45} size={12.5}>Tanggal :</Label>

      <circle cx="1296" cy="266" r="38.500" stroke="#80868f" strokeOpacity=".45" strokeWidth="8.500" />
      <linearGradient id="cube" x2="0" y2="1"><stop stopColor="#a4a6a8" /><stop offset=".35" stopColor="#c8c8ca" /><stop offset="1" stopColor="#a9a9ab" /></linearGradient>
      <rect x="1277.500" y="247.500" width="37" height="37" rx="1" fill="url(#cube)" stroke="#b9b9bb" />
      <rect x="1285" y="255" width="22" height="22" fill="#a6b0b6" />
      <path d="M1278 259.500h36" stroke="#d6d8da" />
      <text x="1288" y="270" fontSize="10.500" fontWeight="700" textLength="16.500" lengthAdjust="spacingAndGlyphs" fill="#3b4553" fontFamily="'Open Sans', sans-serif">TOP</text>
      <ViewLetter x={1296} y={232}>N</ViewLetter>
      <ViewLetter x={1296} y={311}>S</ViewLetter>
      <ViewLetter x={1256} y={271}>W</ViewLetter>
      <ViewLetter x={1336} y={271}>E</ViewLetter>
      <rect x="1271.500" y="329.500" width="47" height="16" rx="3" fill="#9fa0ab" stroke="#bdbdc6" />
      <text x="1276" y="341" fontSize="10.500" textLength="24" fill="#3e414c" fontFamily="'Liberation Sans', sans-serif">WCS</text>
      <path d="M1306 335h8l-4 5Z" stroke="#d8d8de" />

      <path d="M1295 200.500h10" stroke="#eee" strokeWidth="3" />
      <path d="M1318.500 194.500h6v6M1315.500 196.500h6v6h-6Z" stroke="#fff" strokeWidth="1.600" />
      <path d="m1336 194.500 7.500 7m0-7-7.500 7" stroke="#fff" strokeWidth="2.500" />

      <rect x="1320.500" y="372.500" width="31" height="211" rx="2" fill="#8a8d90" fillOpacity=".52" stroke="#7c7f83" strokeOpacity=".6" />
      <g stroke="#41464d" fill="none">
        <circle cx="1346" cy="377.500" r="3.500" /><path d="m1344.500 376 3 3m0-3-3 3" />
        <path d="M1346 391v10a10.500 10.500 0 1 1-10-10Z" /><circle cx="1336" cy="402" r="6" /><circle cx="1336" cy="402" r="3.500" /><path d="m1331 408-2 3m11-3 2 3" />
        <path d="m1333 421 3 3 3-3Z" fill="#41464d" />
        <path d="M1329 453c-6-7-5-8-2-6l3 3-3-11c1-3 3 0 3 2l2 6v-11c1-3 3-1 3 2v8l3-9c3-2 3 1 2 3l-1 8 4-6c3-1 2 1 1 3l-4 9c-3 6-9 6-11-1Z" strokeWidth="1.200" />
        <path d="m1325 462 14 13m0-13-14 13m0-9v-4h4m6 0h4v4m-14 5v4h4" strokeWidth="1.200" /><circle cx="1340" cy="477" r="4" /><path d="m1343 480 5 5" strokeWidth="2" />
        <path d="m1333 491 3 3 3-3Z" fill="#41464d" />
        <path d="M1334 522v-14h-3l5-7 4 7h-3v14" /><ellipse cx="1336" cy="513" rx="11" ry="4" strokeWidth="1.300" /><path d="m1330 513-3 4 5 2" />
        <path d="m1333 529 3 3 3-3Z" fill="#41464d" />
        <path d="M1324.500 541.500h6v6h-6ZM1332.500 541.500h6v6h-6ZM1340.500 541.500h6v6h-6ZM1324.500 550.500h16v13h-16Z" /><path d="m1329 553 6 4-6 4Z" fill="#41464d" />
        <circle cx="1346" cy="578" r="3.500" /><path d="M1344 578h4" />
      </g>
      <path d="M1323 428.500h26M1323 536.500h26" stroke="#74787c" />

      <path d="M1004 362 999.500 353q-1-3 2-1.500l3 3-2.500-10q1-3 3 0l2 6-.5-9.500q1.500-3 3.500 0l.5 9 2-8.500q2-2 3 0l-1 9.500 2-5q3-2 3 1l-2 8q-1 4-3 7Z" fill="#fff" stroke="#000" strokeWidth="1.200" />
      <path d="M1006 362h9" stroke="#fff" strokeWidth="1.500" />
    </svg>
  );
}

/* ---------- status bar ---------- */

function LayoutTab({ w, active = false, children }: { w: string; active?: boolean; children: string }) {
  return <div className={`flex h-[17px] items-center justify-center rounded-b-md [clip-path:polygon(0_0,100%_0,92%_100%,10%_100%)] ${w} ${active ? "bg-gradient-to-b from-[#666] to-[#868686] font-bold tracking-[-0.3px] text-white" : "bg-[#555] text-[#c9c9c9]"}`}>{children}</div>;
}

function Seg({ w, children }: { w: string; children: ReactNode }) {
  return <div className={`mr-px flex h-[26px] shrink-0 items-center border border-[#7a7a7a] bg-[#505050] ${w}`}>{children}</div>;
}

function PersonMark({ c, glow = false }: { c: string; glow?: boolean }) {
  return <path d="M10 2l2 7 6 8-8-4-8 4 6-8Z" fill={c} style={glow ? { filter: "drop-shadow(0 0 2px #0a6dff)" } : undefined} />;
}

function StatusBar() {
  return (
    <div className="flex h-[29px] border-t border-[#565656] bg-[#383838]">
      <div className="flex w-[756px] items-start pl-[9px] text-[12px] tracking-[-0.2px]">
        <LayoutTab w="w-[61px]" active>Model</LayoutTab>
        <LayoutTab w="w-[64px]">Layout1</LayoutTab>
        <LayoutTab w="w-[66px]">Layout2</LayoutTab>
        <svg className="ml-[2px]" width="24" height="17"><path d="M8 0H22Q22 12 15 15H3Q1 13 4 5Z" fill="#505050" /><path d="M12.500 4v9M8 8.500h9" stroke="#d0d0d0" strokeWidth="2" /></svg>
      </div>
      <div className="flex text-[12px] text-white">
        <Seg w="w-[49px]"><span className="w-full text-center tracking-[-0.35px]">MODEL</span></Seg>
        <Seg w="w-[65px]">
          <Ico w={24}><path d="M6.500 3v14M9.500 3v14M12.500 3v14M15.500 3v14M5 5.500h13M5 8.500h13M5 11.500h13M5 14.500h13" stroke="#c4c4c4" strokeWidth=".9" /></Ico>
          <Ico w={27}><path d="M4 4.500h14M4 7.500h14M4 10.500h14M4 13.500h14M4 16.500h14" stroke="#c4c4c4" strokeDasharray="1 2" /></Ico>
          <Caret big />
        </Seg>
        <Seg w="w-[168px]">
          <Ico w={24}><path d="M6 3v13h13M6 11h5v5" stroke="#c4c4c4" strokeWidth="1.300" /></Ico>
          <Ico w={28}><circle cx="12" cy="10" r="6" stroke="#c4c4c4" strokeWidth="1.300" /><path d="M12 10h8M12 10V6M17 7l3 3-4 3" stroke="#c4c4c4" strokeWidth="1.300" /></Ico>
          <Caret big />
          <Ico w={28}><path d="M5 2l16 16M12 2l1 17" stroke="#c4c4c4" strokeWidth="1.200" /></Ico>
          <span className="ml-[3px]"><Caret big /></span>
          <span className="ml-[3px] h-full w-px bg-[#7a7a7a]" />
          <Ico w={25}><path d="M17 3 4 17H18M9 12l5 5" stroke="#1d86ff" strokeWidth="1.500" /></Ico>
          <Ico w={26}><path d="M5 5h13v11H5Z" stroke="#1d86ff" strokeWidth="1.500" /><path d="M2 2h5v5H2Z" fill="#18b218" stroke="#0a3b0a" /></Ico>
          <Caret big />
        </Seg>
        <Seg w="w-[107px]">
          <Ico w={24} className="ml-[2px]"><PersonMark c="#2893ff" glow /><circle cx="14" cy="5" r="3" stroke="#2893ff" strokeWidth="1.500" /></Ico>
          <Ico w={24}><PersonMark c="#b5b5b5" /><path d="M15 3l-3 4h4l-3 4" stroke="#ccc" /></Ico>
          <Ico w={22}><PersonMark c="#bcbcbc" /></Ico>
          <span className="mr-[3px] ml-[4px] tracking-[-0.6px]">1:1</span>
          <Caret big />
        </Seg>
        <Seg w="w-[66px]">
          <Ico w={24}><circle cx="12" cy="10" r="4" stroke="#c4c4c4" strokeWidth="2.500" /><circle cx="12" cy="10" r="5.500" stroke="#c4c4c4" strokeWidth="1.800" strokeDasharray="2.200 2.100" /></Ico>
          <span className="ml-[4px]"><Caret big /></span>
          <span className="ml-[4px] h-full w-px bg-[#7a7a7a]" />
          <Ico w={24}><path d="M12 3v14M4.500 10h15" stroke="#ccc" strokeWidth="1.800" /></Ico>
        </Seg>
        <Seg w="w-[26px]"><Ico w={24}><path d="M4.500 3.500h7v7h-7ZM7 17l4-6 4 6Z" stroke="#c4c4c4" strokeWidth="1.200" /><circle cx="16.500" cy="9" r="3.200" stroke="#c4c4c4" strokeWidth="1.200" /></Ico></Seg>
        <Seg w="w-[26px]"><Ico w={24}><circle cx="12" cy="10" r="8" fill="#0d5cb4" stroke="#1c8bff" strokeWidth="1.500" /><path d="m11 14 5-5" stroke="#6db6ff" strokeWidth="1.200" /></Ico></Seg>
        <Seg w="w-[24px]"><Ico w={22}><path d="M6 3h8l3 4v6H6Z" fill="#5a86b8" stroke="#cfdced" strokeWidth=".8" /><path d="M4 3h5v6H4Z" fill="#e8edf4" stroke="#346" strokeWidth=".6" /><path d="M4 10h7v6H4Z" fill="#f2d23a" /><path d="m10 13 3 4 6-7" stroke="#4cc22e" strokeWidth="2.200" /></Ico></Seg>
        <Seg w="w-[50px]">
          <Ico w={25}><rect x="4.500" y="4.500" width="15" height="11" rx="1" stroke="#ccc" strokeWidth="1.500" /><path d="M7 13v-4l4 4ZM17 7v4l-4-4Z" fill="#ccc" /></Ico>
          <Ico w={22}><path d="M3 5h16M3 10h16M3 15h16" stroke="#ccc" strokeWidth="2" /></Ico>
        </Seg>
      </div>
    </div>
  );
}

/* ---------- desktop taskbar ---------- */

function TaskButton({ w, active = false, children }: { w: string; active?: boolean; children: ReactNode }) {
  return (
    <div className={`flex h-10 flex-col items-center justify-end ${w} ${active ? "bg-[#4a4a4a]" : ""}`}>
      <div className="flex flex-1 items-center">{children}</div>
      <div className={`h-[2px] bg-[#76b9ed] ${active ? "w-full" : "w-10"}`} />
    </div>
  );
}

function Taskbar() {
  return (
    <div className="flex h-10 bg-[#1d1c1b] text-white">
      <div className="flex w-12 items-center justify-center"><Ico w={16} h={16}><path d="M0 2.300 6.500 1.400V7.500H0ZM7.500 1.200 16 0V7.500H7.500ZM0 8.500H6.500V14.600L0 13.700ZM7.500 8.500H16V16L7.500 14.800Z" fill="#fff" /></Ico></div>
      <div className="flex h-10 w-[344px] items-center border border-[#555] bg-[#333] pl-[11px] text-[14.500px] text-[#d4d4d4]">
        <Ico w={17} h={17}><circle cx="10.500" cy="6" r="5" stroke="#ddd" strokeWidth="1.300" /><path d="M7 10 1 16" stroke="#ddd" strokeWidth="1.300" /></Ico>
        <span className="ml-[11px] pt-px tracking-[-0.32px]">Type here to search</span>
      </div>
      <div className="flex w-[50px] items-center justify-center"><Ico w={18} h={16}><path d="M1 1v2.500h10V1M1.500 5.500h9v6h-9ZM1 16v-2.500h10V16M14.500 0v3M14.500 9v7" stroke="#fff" strokeWidth="1.200" /><path d="M13 5h3v3h-3Z" fill="#fff" /></Ico></div>
      <TaskButton w="w-[49px]"><Ico w={24} h={24}><path d="M1 3h8l2 2h11v15H1Z" fill="#e8a92e" /><path d="M1 7h22v14H1Z" fill="#fbd767" /><path d="M5 21v-8h13v8h-4v-4H9v4Z" fill="#3b98e2" /></Ico></TaskButton>
      <TaskButton w="w-[49px]"><Ico w={24} h={24}><linearGradient id="edge" x1="0" y1="1" x2="1" y2="0"><stop stopColor="#0b5cad" /><stop offset=".5" stopColor="#2bb4e6" /><stop offset="1" stopColor="#6de052" /></linearGradient><circle cx="12" cy="12" r="11.500" fill="url(#edge)" /><path d="M14 15c-3-1-3-6-1-7-4-3-11 0-11 6 0 6 6 10 11 9 4 0 7-3 8-5-4 2-10 1-12-3Z" fill="#1262b5" /><path d="M13 8c-3 3-1 7 3 8 2 .5 5 0 7-2-3 2-8 1-9-2Z" fill="#1d1c1b" /></Ico></TaskButton>
      <TaskButton w="w-[49px]"><Ico w={24} h={24}><linearGradient id="disc" x2="1" y2="1"><stop stopColor="#ff9a42" /><stop offset="1" stopColor="#a05cff" /></linearGradient><circle cx="12" cy="12" r="10.500" stroke="url(#disc)" strokeWidth="2" fill="#39363a" /><circle cx="12" cy="12" r="4" fill="#eee" /><circle cx="12" cy="12" r="1.300" fill="#222" /><path d="m17 8 4-5" stroke="#f0727b" strokeWidth="2.500" /></Ico></TaskButton>
      <TaskButton w="w-[50px]"><Ico w={22} h={22}><path d="M0 0h22v22H0Z" fill="#2096e4" /><path d="M0 14 8 7l14 15H0Z" fill="#10406f" /><path d="m12 15 4-4 6 6v5h-4Z" fill="#1965a8" /><circle cx="15" cy="5" r="2.200" fill="#fff" /></Ico></TaskButton>
      <TaskButton w="w-12" active><Ico w={24} h={24}><path d="M0 0h24v24H0Z" fill="#f7e9e3" /><path d="M4 20 10 3h5l5 17h-5l-1-4-5 1-1 3Z" fill="#b81f27" /><path d="m12 8 1.500 5-3 1Z" fill="#f7e9e3" /><path d="M10 3h3L7 18l-3 2Z" fill="#e25355" /></Ico></TaskButton>
      <div className="ml-auto flex items-center text-[13px]">
        <Ico w={25} h={18}><rect x="1" y="2" width="20" height="14" rx="1.500" stroke="#fff" strokeWidth="1.600" /><path d="M23.500 4v10q0 2-2 2" stroke="#fff" /><path d="M4 5.500h14M12 9h6M12 12.500h6" stroke="#fff" strokeWidth="1.500" /><path d="M4.500 8.500h5v4h-5Z" stroke="#fff" /></Ico>
        <span className="ml-[7px] w-[38px] pt-[2px] tracking-[-0.1px]">30°C</span>
        <span className="w-[69px] pt-[2px] tracking-[-0.15px]">Berawan</span>
        <Ico w={12} h={8}><path d="M1 7 6 1.500 11 7" stroke="#fff" strokeWidth="1.200" /></Ico>
        <Ico w={18} h={14} className="ml-[10px]"><path d="M5 4.500h11v7H7M16.500 7v2" stroke="#fff" strokeWidth="1.200" /><path d="M1 2v3q2 3 4 0V2M3 7v5h3M2 0v2M4 0v2" stroke="#fff" /><path d="M8 6.500h5v3H8Z" fill="#fff" /></Ico>
        <Ico w={18} h={14} className="ml-[6px]"><path d="M1 5v4h2.500L7 12.500v-11L3.500 5Z" stroke="#fff" /><path d="M9 5q1.500 2 0 4M11.500 3q3 4 0 8M14 1.500q4 5.500 0 11" stroke="#fff" /></Ico>
        <Ico w={15} h={14} className="ml-[8px]"><path d="M3 13Q4 5 13 3M6 13q1-5 7-6.500M9 13q1-2.500 4-3.500" stroke="#ddd" strokeWidth="1.200" /><path d="M1 13Q1 3 12 .5" stroke="#777" /><circle cx="12" cy="12" r="1.300" fill="#fff" /></Ico>
        <Ico w={17} h={16} className="ml-[12px]"><path d="M5 11 11 1l3 1-5 11-4 1ZM9 13q5-7 7-7t-2 5M5 9Q1 9 1 12t5 2" stroke="#fff" strokeWidth="1.200" /></Ico>
        <span className="ml-[12px] w-[36px] pt-px text-[12px] tracking-[-0.3px]">ENG</span>
        <div className="flex w-[59px] flex-col items-center text-[12px] leading-[18px] tracking-[-0.5px] whitespace-nowrap"><span>22:23</span><span>31/08/2022</span></div>
        <div className="relative mr-[10px] ml-[16px] h-[26px] w-[28px]">
          <Ico w={28} h={26}><path d="M1 2h16v13h-8l-4 4v-4H1Z" fill="#fff" /><path d="M4 5.500h10M4 8.500h10M4 11.500h7" stroke="#222" /><circle cx="16.500" cy="17.500" r="7.500" fill="#3a3a3a" stroke="#aaa" /></Ico>
          <span className="absolute top-[9px] left-[13px] text-[12px] leading-[17px] font-bold">2</span>
        </div>
        <span className="h-10 w-[4px] border-l border-[#666]" />
      </div>
    </div>
  );
}

export default function App() {
  return (
    <div className="flex h-[768px] w-[1366px] flex-col overflow-hidden bg-[#303030] font-['Noto_Sans','Open_Sans',sans-serif]">
      <div className="h-[2px] bg-[#2a282a]" />
      <div className="flex h-[726px]">
        <div className="flex w-[9px] flex-col bg-[#1c1c1c]">
          <div className="h-[1px] bg-[#2a282a]" />
          <div className="ml-[2px] h-4 border-2 border-r-0 border-[#e0b040] bg-[#f8e6a0]" />
          <div className="h-1 bg-[#2a282a]" />
          <div className="h-[23px] bg-[#0063b1]" />
          <div className="h-[92px] bg-[#202020]" />
          <div className="h-[378px] border-t border-[#333]" />
          <div className="h-[22px] bg-[#333]" />
          <div className="flex-1" />
          <div className="h-[23px] bg-[#333]" />
        </div>
        <div className="flex w-[1348px] flex-col">
          <div className="flex h-[719px] flex-col border-r border-b border-l border-white">
            <TopBar />
            <Ribbon />
            <DocTabs />
            <Canvas />
            <StatusBar />
          </div>
          <div className="flex h-[7px] bg-[#333]">
            <span className="ml-[60px] h-[2px] w-px bg-white" />
            <span className="ml-[99px] h-[2px] w-px bg-white" />
            <span className="mr-[17px] ml-auto flex w-[22px] justify-center bg-[#686868]"><span className="h-[3px] w-1 bg-white" /></span>
          </div>
        </div>
        <div className="flex w-[9px] flex-col bg-[#1c1c1c]">
          <div className="h-[21px] bg-[#2a282a]" />
          <div className="flex h-[23px] items-center bg-black"><div className="h-[14px] w-[6px] rounded-r-full bg-[#0f6ed0]" /></div>
          <div className="h-[92px] border-b border-[#333] bg-[#202020]" />
          <div className="flex-1" />
          <div className="h-[23px] bg-[#333]" />
        </div>
      </div>
      <Taskbar />
    </div>
  );
}
